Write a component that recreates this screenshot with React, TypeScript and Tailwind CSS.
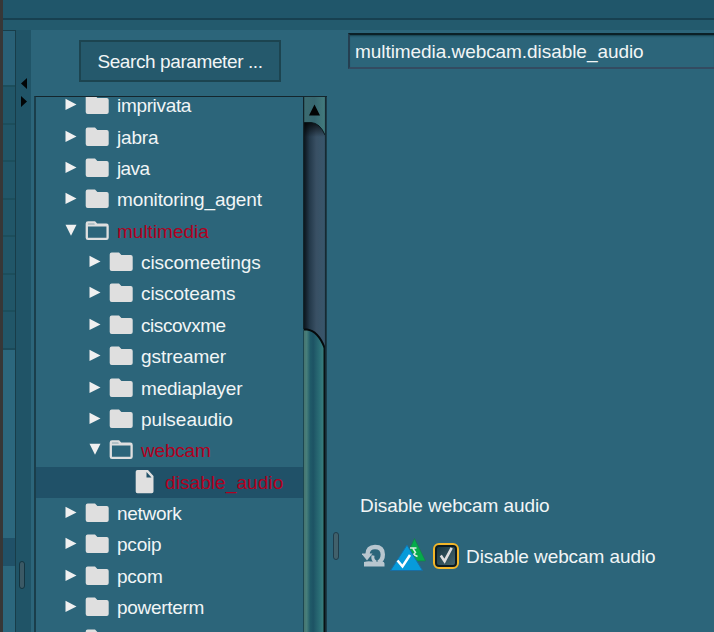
import React from "react";

type Kind = "folder" | "open" | "file";
interface Node {
  label: string;
  level: 0 | 1 | 2;
  kind: Kind;
  selected?: boolean;
  tracking?: string;
}

const nodes: Node[] = [
  { label: "imprivata", level: 0, kind: "folder", tracking: "tracking-[-0.330px]" },
  { label: "jabra", level: 0, kind: "folder", tracking: "tracking-[-0.200px]" },
  { label: "java", level: 0, kind: "folder", tracking: "tracking-[-0.600px]" },
  { label: "monitoring_agent", level: 0, kind: "folder", tracking: "tracking-[-0.120px]" },
  { label: "multimedia", level: 0, kind: "open" },
  { label: "ciscomeetings", level: 1, kind: "folder", tracking: "tracking-[-0.060px]" },
  { label: "ciscoteams", level: 1, kind: "folder", tracking: "tracking-[-0.060px]" },
  { label: "ciscovxme", level: 1, kind: "folder", tracking: "tracking-[-0.440px]" },
  { label: "gstreamer", level: 1, kind: "folder", tracking: "tracking-[-0.060px]" },
  { label: "mediaplayer", level: 1, kind: "folder", tracking: "tracking-[-0.200px]" },
  { label: "pulseaudio", level: 1, kind: "folder" },
  { label: "webcam", level: 1, kind: "open", tracking: "tracking-[-0.200px]" },
  { label: "disable_audio", level: 2, kind: "file", selected: true, tracking: "tracking-[0.080px]" },
  { label: "network", level: 0, kind: "folder", tracking: "tracking-[-0.300px]" },
  { label: "pcoip", level: 0, kind: "folder", tracking: "tracking-[-0.200px]" },
  { label: "pcom", level: 0, kind: "folder", tracking: "tracking-[-0.250px]" },
  { label: "powerterm", level: 0, kind: "folder", tracking: "tracking-[-0.300px]" },
  { label: "", level: 0, kind: "folder" },
];

const indent = ["pl-[28px]", "pl-[52px]", "pl-[76px]"];

function NodeIcon({ kind }: { kind: Kind }) {
  return (
    <svg className="h-[31px] w-[24px] shrink-0" viewBox="0 0 24 31">
      {kind === "folder" && (
        <path d="M2.700 5.500h7.300l2.400 2.400h9.300q2 0 2 2v12q0 2-2 2h-19q-2 0-2-2V7.500q0-2 2-2z" fill="#dfdfdf" />
      )}
      {kind === "open" && (
        <path d="M3 6.500h6.600l2.200 2.200h9.600q1.200 0 1.200 1.200v11.800q0 1.200-1.200 1.200H3q-1.200 0-1.200-1.200V7.700q0-1.200 1.200-1.200zM1.800 9.300h20" fill="none" stroke="#dfdfdf" strokeWidth="2.300" />
      )}
      {kind === "file" && (
        <path fillRule="evenodd" d="M4.500 3h10.500l5.500 6v15.500q0 1.800-1.800 1.800H4.500q-1.800 0-1.800-1.800V4.800q0-1.800 1.800-1.800zM13.500 5v5.500h5z" fill="#e0e0e0" />
      )}
    </svg>
  );
}

function Row({ node }: { node: Node }) {
  const red = node.kind !== "folder";
  return (
    <div className={`flex h-[31.375px] items-center ${indent[node.level]} ${node.selected ? "bg-[#205168]" : ""}`}>
      <svg className="h-[31px] w-[14px] shrink-0" viewBox="0 0 14 31">
        {node.kind === "folder" && <path d="M1.500 8.700v11.300L12.500 14.400z" fill="#f0f0f0" />}
        {node.kind === "open" && <path d="M1.500 8.700h11L7 19.800z" fill="#f0f0f0" />}
      </svg>
      <span className="ml-[7px] flex">
        <NodeIcon kind={node.kind} />
      </span>
      <span className={`ml-[8px] whitespace-pre ${node.tracking ?? ""} ${red ? "text-[#b00020]" : "text-[#f1f5f6]"}`}>{node.label}</span>
    </div>
  );
}

function LeftStrip() {
  return (
    <div className="flex w-[13px] shrink-0 flex-col border-t border-r-[1.500px] border-[#183d49] bg-[#2c677d]">
      <div className="h-[54px] shrink-0 bg-[#296076]" />
      {[0, 1, 2, 3, 4, 5, 6].map((i) => (
        <div key={i} className="h-[37.500px] shrink-0 border-t-2 border-[#1c4e5c] bg-[#215668]" />
      ))}
      <div className="h-[2px] shrink-0 bg-[#1b4a59]" />
      <div className="mt-[188px] h-[28px] shrink-0 bg-[#205168]" />
    </div>
  );
}

function Splitter() {
  return (
    <div className="flex w-[15px] shrink-0 flex-col bg-[#205467]">
      <svg className="mt-[48px] h-[30px] w-[15px] shrink-0" viewBox="0 0 15 30">
        <path d="M11 0v11L5 5.500zM5 18v11l6-5.500z" fill="#020506" />
      </svg>
      <div className="mt-[453px] ml-[3px] h-[28px] w-[6px] shrink-0 rounded-full border-[1.500px] border-[#143541] bg-[#3b5965]" />
    </div>
  );
}

function Scrollbar() {
  return (
    <svg className="h-[535px] w-[24px] shrink-0" viewBox="0 0 24 535">
      <defs>
        <linearGradient id="track">
          <stop offset="0" stopColor="#070d13" />
          <stop offset="0.300" stopColor="#24394a" />
          <stop offset="0.600" stopColor="#395064" />
          <stop offset="1" stopColor="#38566b" />
        </linearGradient>
        <linearGradient id="thumb">
          <stop offset="0" stopColor="#47746f" />
          <stop offset="0.130" stopColor="#477f7b" />
          <stop offset="0.300" stopColor="#205b69" />
          <stop offset="0.450" stopColor="#1d5364" />
          <stop offset="0.750" stopColor="#2a6d75" />
          <stop offset="1" stopColor="#3c827f" />
        </linearGradient>
        <linearGradient id="cap">
          <stop offset="0" stopColor="#3b6b70" />
          <stop offset="0.500" stopColor="#376770" />
          <stop offset="1" stopColor="#427b7d" />
        </linearGradient>
        <linearGradient id="shade" x1="0" x2="0" y1="0" y2="1">
          <stop offset="0" stopColor="#000" stopOpacity="0.800" />
          <stop offset="1" stopColor="#000" stopOpacity="0" />
        </linearGradient>
      </defs>
      <path d="M0 0h22v535H0z" fill="url(#track)" />
      <path d="M0 25h22v15H0z" fill="url(#shade)" />
      <path d="M1 0h21v38Q17 26 8 25.500H1z" fill="url(#cap)" />
      <path d="M1 25.500h7Q17 26 22 38" fill="none" stroke="#0b181c" strokeWidth="1" />
      <path d="M11.500 7.500l5.500 11H6z" fill="#020303" />
      <path d="M1 233h4q10 2 16.500 17v285H1z" fill="url(#thumb)" />
      <path d="M0 232.500h4q11 1.500 17.500 18" fill="none" stroke="#05090b" strokeWidth="2" />
      <path d="M21.500 249v286" stroke="#071012" strokeWidth="2" />
      <path d="M0.500 0v232" stroke="#11242b" strokeWidth="1.500" />
      <path d="M0.500 232v303" stroke="#1c4751" />
      <path d="M22.800 0v535" stroke="#162a32" strokeWidth="1.800" />
    </svg>
  );
}

function Tree() {
  return (
    <div className="ml-[3px] flex w-[293px] flex-1 overflow-hidden border-t border-l-2 border-t-[#14262d] border-l-[#1a3e4b]">
      <div className="w-[267px] shrink-0">
        <div className="-mt-[7px]">
          {nodes.map((n, i) => (
            <Row key={i} node={n} />
          ))}
        </div>
      </div>
      <Scrollbar />
    </div>
  );
}

function Details() {
  return (
    <div className="flex flex-1 flex-col overflow-hidden">
      <div className="mt-[3px] ml-[12px] flex h-[36px] items-center border-t-2 border-b-2 border-l-2 border-t-[#0b2027] border-b-[#334b61] border-l-[#243f51] pl-[5px] shadow-[inset_0_2px_2px_-1px_#17404d]">
        <span className="text-[#f1f5f6] tracking-[-0.060px]">multimedia.webcam.disable_audio</span>
      </div>
      <div className="mt-[423px] ml-[24px] flex h-[26px] items-center text-[#f1f5f6] tracking-[-0.080px]">Disable webcam audio</div>
      <div className="mt-[17px] ml-[26px] flex h-[42px] items-center text-[#f1f5f6]">
        <svg className="h-[42px] w-[25px] shrink-0" viewBox="0 0 25 42">
          <path d="M5.500 19.500Q5.500 12 13 12Q20.800 12 20.800 19.500Q20.800 25 16.500 27.500" fill="none" stroke="#b8c6cf" strokeWidth="4.400" />
          <path d="M14 27Q10 25.500 11 20.500" fill="none" stroke="#b8c6cf" strokeWidth="3" />
          <path d="M-.5 18.500h11l-5.500 7z" fill="#b8c6cf" />
          <path d="M2 27q4-1 7-.500h11q2.500 0 2.500 2v3H2z" fill="#b8c6cf" />
        </svg>
        <svg className="ml-[2px] h-[42px] w-[38px] shrink-0" viewBox="0 0 38 42">
          <path d="M25.500 3.500l11 22.500H15z" fill="#05ab4b" stroke="#187b4b" strokeWidth=".7" strokeLinejoin="round" />
          <path d="M21 13h6.500M24 13.500l2.500 4-2 2 4 2" fill="none" stroke="#d9eee2" strokeWidth="1.500" />
          <path d="M18 10L1.500 35.500h32z" fill="#079bda" stroke="#176fa5" strokeWidth="1" strokeLinejoin="round" />
          <path d="M8.500 25.500l5 6L21 20" fill="none" stroke="#fff" strokeWidth="2.500" />
        </svg>
        <span className="ml-[6px] flex h-[26px] w-[26px] shrink-0 items-center justify-center rounded-[6px] border-[2.500px] border-[#f1b629] bg-[#0c1b21]">
          <svg className="h-[18px] w-[18px] shrink-0" viewBox="0 0 19 19">
            <defs>
              <linearGradient id="box" x1="0" x2="1" y1="0" y2="1">
                <stop offset="0" stopColor="#183640" />
                <stop offset="1" stopColor="#44656f" />
              </linearGradient>
            </defs>
            <rect width="19" height="19" rx="2" fill="url(#box)" />
            <path d="M4 9l4 6L15.500 1" fill="none" stroke="#dedede" strokeWidth="2.700" />
          </svg>
        </span>
        <span className="ml-[7px] tracking-[-0.080px]">Disable webcam audio</span>
      </div>
    </div>
  );
}

export default function App() {
  return (
    <div className="flex h-[632px] w-[714px] overflow-hidden bg-[#373737] pl-[3px] font-['Liberation_Sans',sans-serif] text-[19px] leading-none">
      <div className="flex flex-1 flex-col overflow-hidden bg-[#205467]">
        <div className="h-[18px] shrink-0 bg-[#20566a]" />
        <div className="h-[12px] shrink-0 border-t-2 border-[#174050] bg-[#235a6d]" />
        <div className="flex flex-1 overflow-hidden">
          <LeftStrip />
          <Splitter />
          <div className="flex flex-1 overflow-hidden bg-[#2c657a]">
            <div className="flex w-[296px] shrink-0 flex-col">
              <button className="mt-[10px] ml-[48px] flex h-[42px] w-[202px] shrink-0 items-center justify-center border-2 border-[#1c4450] bg-[#25596c] text-[#f1f5f6]">
                <span className="tracking-[-0.400px]">Search parameter ...</span>
              </button>
              <div className="h-[14px] shrink-0" />
              <Tree />
            </div>
            <div className="flex w-[9px] shrink-0 flex-col">
              <div className="mt-[502px] ml-[6px] h-[28px] w-[6px] shrink-0 rounded-full border-[1.500px] border-[#1f3c4b] bg-[#41606b]" />
            </div>
            <div className="flex flex-1 overflow-hidden">
              <Details />
            </div>
          </div>
        </div>
      </div>
    </div>
  );
}
